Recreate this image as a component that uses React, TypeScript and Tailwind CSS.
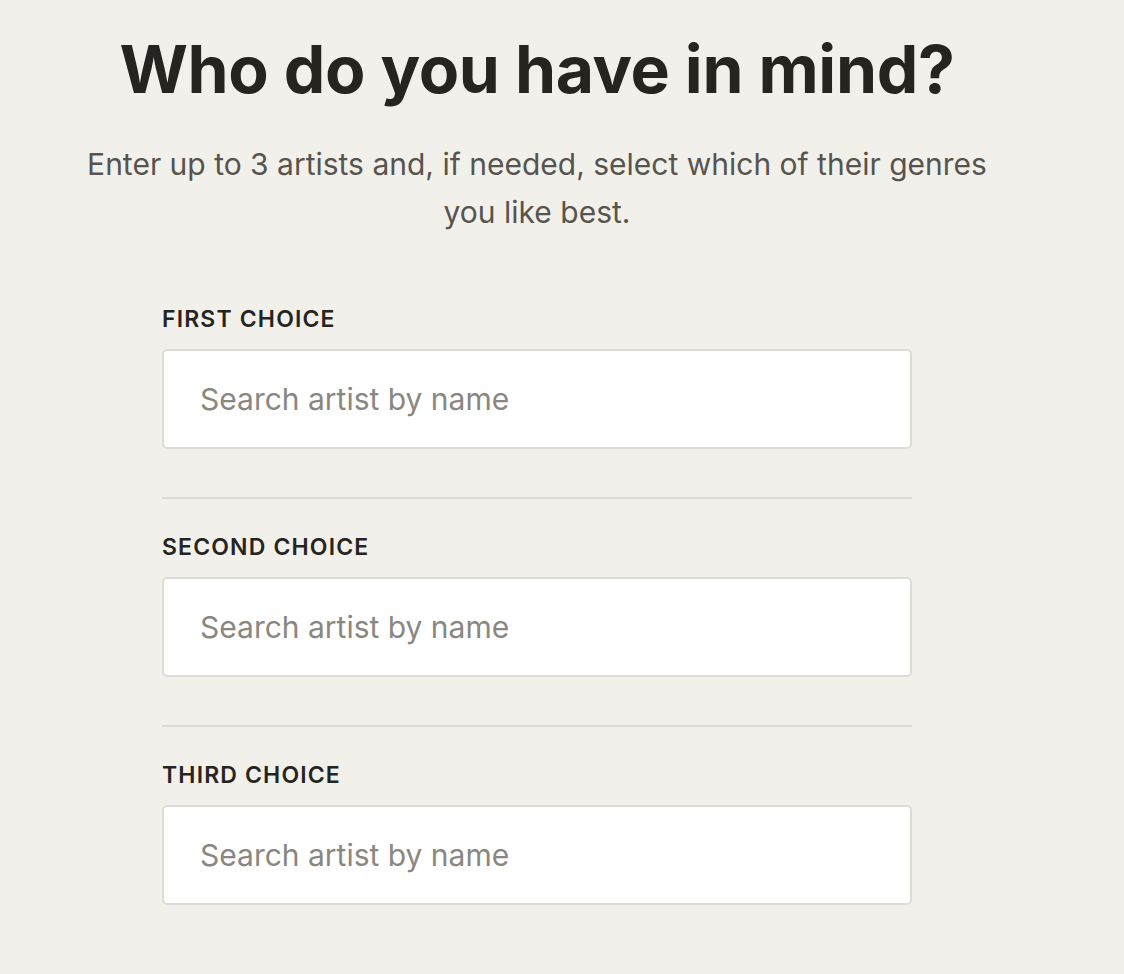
const choices = ['First choice', 'Second choice', 'Third choice'];

export default function App() {
  return (
    <div className="min-h-[974px] bg-[#f2f0eb] font-['Inter',sans-serif]">
      <div className="w-[1074px] pt-[29px] flex flex-col items-center">
        <h1 className="text-[66px] leading-[80px] font-bold tracking-[-0.005em] text-[#262420]">
          Who do you have in mind?
        </h1>
        <p className="mt-[31px] w-[940px] text-center text-[30px] leading-[48px] text-[#57544e]">
          Enter up to 3 artists and, if needed, select which of their genres you like best.
        </p>
        <div className="mt-[67px] w-[750px] flex flex-col">
          {choices.map((label, i) => (
            <div key={label} className="flex flex-col">
              {i > 0 && <div className="h-[2px] bg-[#dfdcd6] mt-[48px] mb-[32px]" />}
              <label className="text-[23px] leading-[32px] font-semibold uppercase tracking-[0.05em] text-[#262420]">
                {label}
              </label>
              <input
                type="text"
                placeholder="Search artist by name"
                className="mt-[14px] h-[100px] w-full rounded-[5px] border-2 border-[#dfdcd6] bg-white px-[36px] text-[30px] text-[#262420] placeholder:text-[#8a8780] outline-none"
              />
            </div>
          ))}
        </div>
      </div>
    </div>
  );
}
